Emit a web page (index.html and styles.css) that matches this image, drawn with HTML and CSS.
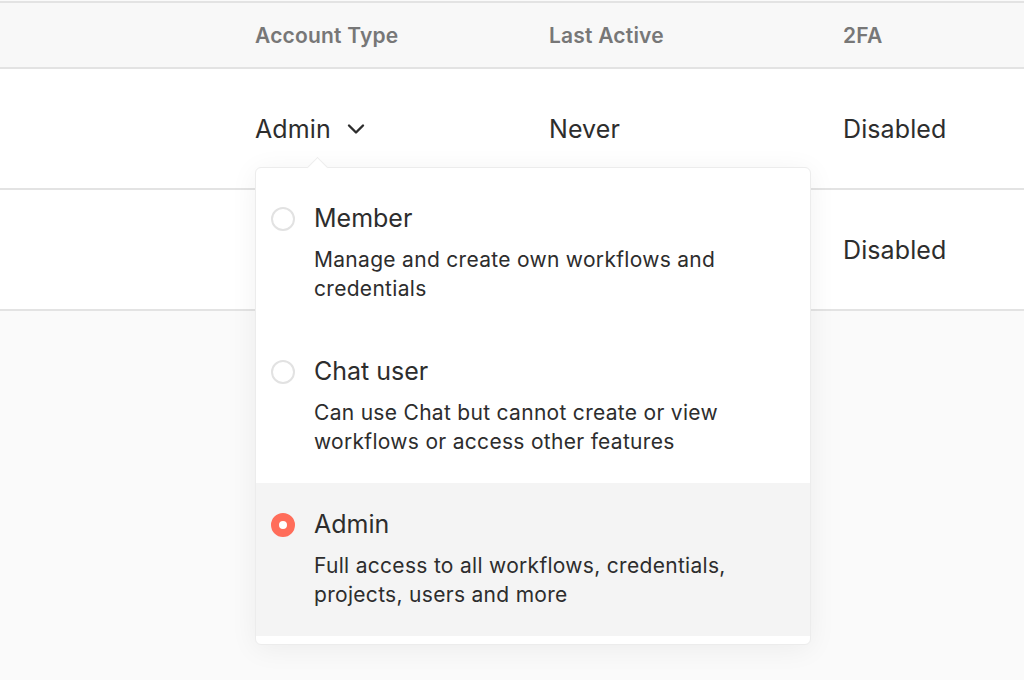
FILE: index.html
```html
<!DOCTYPE html>
<html>
<head>
    <meta charset="UTF-8">
    <meta name="viewport" content="width=device-width, initial-scale=1.0">
    <title>Users</title>
    <link rel="stylesheet" href="styles.css">
</head>
<body>
    <div class="users-table">
        <div class="row head">
            <div class="cell"></div>
            <div class="cell">Account Type</div>
            <div class="cell">Last Active</div>
            <div class="cell">2FA</div>
        </div>
        <div class="row">
            <div class="cell"></div>
            <div class="cell role-cell">
                <span class="role-trigger">Admin
                    <svg class="chevron" width="20" height="20" viewBox="0 0 20 20"><path d="M3 6.5 10 13.5l7-7" fill="none" stroke="#2d2d2d" stroke-width="2.4" stroke-linecap="round" stroke-linejoin="round"/></svg>
                </span>
            </div>
            <div class="cell">Never</div>
            <div class="cell">Disabled</div>
        </div>
        <div class="row">
            <div class="cell"></div>
            <div class="cell"></div>
            <div class="cell"></div>
            <div class="cell">Disabled</div>
        </div>
    </div>

    <div class="role-menu">
        <div class="option">
            <span class="radio"></span>
            <div class="option-text">
                <div class="option-title">Member</div>
                <div class="option-desc">Manage and create own workflows and credentials</div>
            </div>
        </div>
        <div class="option">
            <span class="radio"></span>
            <div class="option-text">
                <div class="option-title">Chat user</div>
                <div class="option-desc">Can use Chat but cannot create or view workflows or access other features</div>
            </div>
        </div>
        <div class="option selected">
            <span class="radio checked"></span>
            <div class="option-text">
                <div class="option-title">Admin</div>
                <div class="option-desc">Full access to all workflows, credentials, projects, users and more</div>
            </div>
        </div>
    </div>
</body>
</html>
```

FILE: styles.css
```css
:root {
    --primary-color: #ff6d5a;
    --dark-text: #2d2d2d;
    --muted-text: #777777;
    --border-color: #e3e3e3;
}
body {
    font-family: Inter, 'Noto Sans', sans-serif;
    margin: 0;
    padding: 0;
    background-color: #fafafa;
    color: var(--dark-text);
    height: 680px;
    overflow: hidden;
    position: relative;
}
.users-table {
    margin-top: 1px;
    border-top: 2px solid var(--border-color);
    background-color: white;
}
.row {
    display: grid;
    grid-template-columns: 255px 294px 294px 1fr;
    align-items: center;
    height: 119px;
    border-bottom: 2px solid var(--border-color);
    font-size: 25px;
    letter-spacing: 0.1px;
}
.row.head {
    height: 64px;
    background-color: #f8f8f8;
    font-size: 21px;
    letter-spacing: 0.2px;
    font-weight: 600;
    color: var(--muted-text);
}
.role-trigger {
    display: inline-flex;
    align-items: center;
    gap: 15px;
}
.chevron {
    margin-top: 1px;
}
.role-menu {
    position: absolute;
    left: 255px;
    top: 167px;
    width: 556px;
    padding: 9px 0 8px;
    background-color: white;
    border: 1px solid #ececec;
    border-radius: 6px;
    box-shadow: 0 4px 28px rgba(0, 0, 0, 0.06);
    box-sizing: border-box;
}
.role-menu::before {
    content: "";
    position: absolute;
    left: 54px;
    top: -8px;
    width: 14px;
    height: 14px;
    background-color: white;
    border-left: 1px solid #ececec;
    border-top: 1px solid #ececec;
    transform: rotate(45deg);
}
.option {
    display: flex;
    gap: 19px;
    padding: 25px 16px 26px 15px;
    height: 153px;
    box-sizing: border-box;
    position: relative;
}
.option.selected {
    background-color: #f4f4f4;
}
.radio {
    flex: none;
    width: 24px;
    height: 24px;
    margin-top: 5px;
    border: 2px solid #e2e2e2;
    border-radius: 50%;
    box-sizing: border-box;
    background-color: white;
}
.radio.checked {
    border: 8px solid var(--primary-color);
}
.option-title {
    font-size: 25px;
    line-height: 32px;
}
.option-desc {
    margin-top: 11px;
    font-size: 21px;
    line-height: 29px;
    letter-spacing: 0.3px;
}
```
